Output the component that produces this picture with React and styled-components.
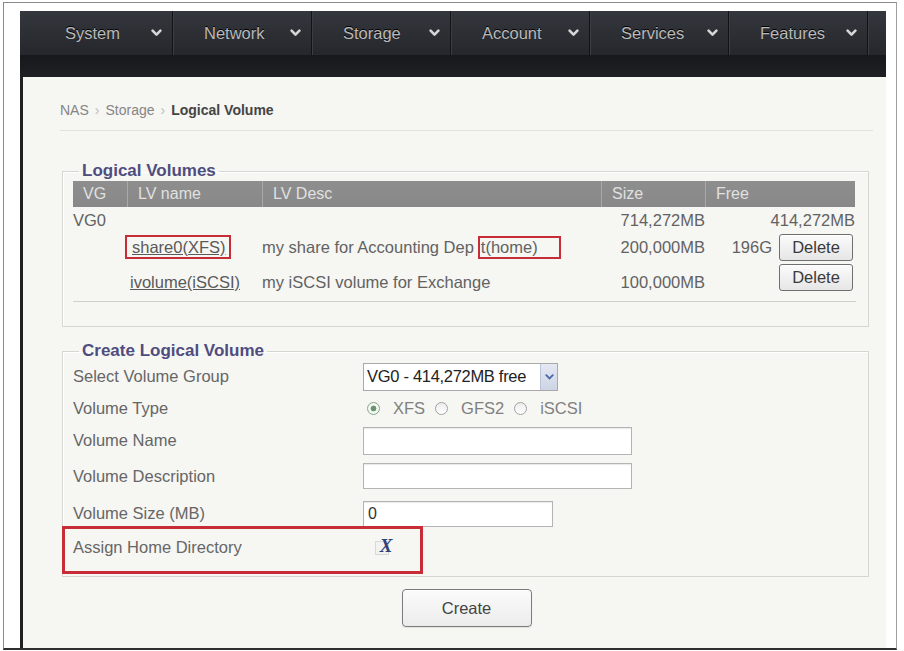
import React from 'react';
import styled, { createGlobalStyle, css } from 'styled-components';

const GlobalStyle = createGlobalStyle`
  html, body { margin: 0; padding: 0; background: #ffffff; }
  body { font-family: "Liberation Sans", Arial, sans-serif; }
  * { box-sizing: border-box; }
`;

const RED = '#c62d36';

const Frame = styled.div`
  width: 894px;
  height: 648px;
  margin: 2px 0 0 3px;
  border: 1px solid #8a8a8a;
  border-right-color: #a0a0a0;
  border-bottom: 2px solid #2e2e2e;
  padding: 8px 10px 0 16px;
  display: flex;
  flex-direction: column;
  background: #ffffff;
`;

/* ---------- top menu ---------- */

const Nav = styled.nav`
  display: flex;
  flex-direction: column;
  background: #1b1d21;
`;

const MenuRow = styled.div`
  display: flex;
  height: 44px;
  padding-left: 14px;
  background: linear-gradient(#34373d, #25272c);
`;

const MenuItem = styled.div`
  width: 139px;
  display: flex;
  align-items: center;
  padding: 0 10px 0 31px;
  border-right: 1px solid #121315;
  box-shadow: 1px 0 0 #3a3d43;
  color: #b9b9b9;
  font-size: 16.5px;
  text-shadow: 0 -1px 0 #000;
`;

const Chevron = styled.svg`
  margin-left: auto;
  flex: none;
`;

const SubBar = styled.div`
  height: 22px;
  background: linear-gradient(#16181b, #1e2024);
`;

/* ---------- page body ---------- */

const Panel = styled.main`
  flex: 1;
  background: #f6f6f3;
  border-left: 3px solid #1f2125;
  padding: 24px 13px 0 37px;
`;

const Crumbs = styled.div`
  font-size: 14px;
  line-height: 18px;
  color: #858585;
  padding-bottom: 11px;
  border-bottom: 1px solid #e1e1de;
`;

const CrumbSep = styled.span`
  color: #bcbcbc;
  margin: 0 6px;
`;

const CrumbCurrent = styled.span`
  color: #444;
  font-weight: bold;
`;

const Group = styled.fieldset`
  margin: ${p => p.$top}px 4px 0 2px;
  padding: 0 12px ${p => p.$bottom}px 10px;
  border: 1px solid #d6d6d3;
  box-shadow: inset 1px 1px 0 #ffffff;
  min-width: 0;
`;

const GroupTitle = styled.legend`
  margin-left: 6px;
  padding: 0 3px;
  font-size: 17px;
  line-height: 20px;
  font-weight: bold;
  color: #4f4d7e;
`;

/* ---------- volume table ---------- */

const VolumeTable = styled.div`
  display: grid;
  grid-template-columns: 54px 135px 339px 104px 150px;
  grid-template-rows: 26px 25px 30px 30px;
  padding-bottom: 9px;
  border-bottom: 1px solid #cfcfcc;
  font-size: 16.5px;
  color: #626262;
`;

const HeadCell = styled.div`
  background: linear-gradient(#8e8e8e, #888888);
  color: #e0e0e0;
  display: flex;
  align-items: center;
  padding-left: 10px;
  font-size: 16px;
  border-left: ${p => (p.$first ? 'none' : '1px solid #a9a9a9')};
`;

const Cell = styled.div`
  display: flex;
  align-items: ${p => (p.$low ? 'flex-end' : 'center')};
  justify-content: ${p => (p.$right ? 'flex-end' : 'flex-start')};
  gap: 7px;
  padding-left: ${p => p.$indent || 0}px;
  padding-right: ${p => p.$trail || 0}px;
  line-height: 20px;
  white-space: nowrap;
`;

const VolumeLink = styled.a`
  color: #5a5a5a;
  text-decoration: underline;
  cursor: pointer;
`;

const BoxedLink = styled(VolumeLink)`
  margin-left: -2px;
  padding: 0 3px 0 5px;
  border: 2px solid ${RED};
`;

const MarkedText = styled.span`
  position: relative;
  &::after {
    content: '';
    position: absolute;
    left: -3px;
    right: -23px;
    top: -1px;
    bottom: -2px;
    border: 2px solid ${RED};
    pointer-events: none;
  }
`;

const SmallButton = styled.button`
  width: 74px;
  height: 27px;
  padding: 0;
  border: 1px solid #6f6f6f;
  border-radius: 3px;
  background: linear-gradient(#fbfbfb, #e6e6e6);
  font-family: inherit;
  font-size: 16.5px;
  color: #3a3a3a;
  box-shadow: inset 0 1px 0 #fff;
`;

/* ---------- create form ---------- */

const FormRow = styled.div`
  position: relative;
  display: grid;
  grid-template-columns: 290px 1fr;
  align-items: center;
  height: ${p => p.$h}px;
  ${p =>
    p.$marked &&
    css`
      &::after {
        content: '';
        position: absolute;
        left: -11px;
        top: -6px;
        width: 355px;
        height: 42px;
        border: 3px solid ${RED};
        pointer-events: none;
      }
    `}
`;

const Label = styled.span`
  font-size: 16.5px;
  color: #666;
`;

const Select = styled.div`
  display: flex;
  width: 195px;
  height: 28px;
  border: 1px solid #a9a9a9;
  background: #fff;
  font-size: 16.5px;
  color: #222;
`;

const SelectText = styled.span`
  flex: 1;
  display: flex;
  align-items: center;
  padding-left: 3px;
  letter-spacing: -0.3px;
  white-space: nowrap;
`;

const SelectArrow = styled.span`
  width: 17px;
  display: flex;
  align-items: center;
  justify-content: center;
  background: linear-gradient(#e4e8f2, #cdd4e5);
  border-left: 1px solid #bcc4d8;
`;

const RadioGroup = styled.div`
  display: flex;
  align-items: center;
  padding-left: 4px;
  font-size: 16.5px;
  color: #808080;
`;

const Radio = styled.span`
  width: 13px;
  height: 13px;
  border-radius: 50%;
  border: 1px solid ${p => (p.$on ? '#86a886' : '#a2a2a2')};
  background: ${p =>
    p.$on
      ? 'radial-gradient(circle, #6a956a 0 2.6px, #f4f8f4 3.2px)'
      : 'linear-gradient(#ececec, #ffffff)'};
  margin-left: ${p => (p.$first ? 0 : 10)}px;
  margin-right: 13px;
  flex: none;
`;

const TextInput = styled.input`
  width: ${p => p.$w}px;
  height: ${p => p.$h}px;
  border: 1px solid #b4b4b4;
  box-shadow: inset 0 1px 1px #e8e8e8;
  background: #fff;
  padding: 0 4px;
  font-family: inherit;
  font-size: 16px;
  color: #333;
  outline: none;
`;

const HomeMark = styled.span`
  position: relative;
  margin-left: 12px;
  width: 16px;
  height: 16px;
  display: inline-flex;
  align-items: center;
  justify-content: center;
  &::before {
    content: '';
    position: absolute;
    left: 0;
    bottom: 0;
    width: 12px;
    height: 12px;
    border: 1px solid #d8d8d8;
    background: #f2f2f2;
  }
`;

const HomeGlyph = styled.span`
  position: relative;
  top: -2px;
  left: 3px;
  font-family: "Liberation Serif", "Times New Roman", serif;
  font-weight: bold;
  font-style: italic;
  font-size: 19px;
  line-height: 1;
  color: #30407a;
`;

const Actions = styled.div`
  display: flex;
  justify-content: center;
  padding-top: 12px;
`;

const CreateButton = styled.button`
  width: 130px;
  height: 38px;
  border: 1px solid #7b7b7b;
  border-radius: 4px;
  background: linear-gradient(#fbfbfb, #ececec);
  box-shadow: inset 0 1px 0 #fff, 0 1px 1px rgba(0, 0, 0, 0.08);
  font-family: inherit;
  font-size: 16.5px;
  color: #444;
`;

const menu = ['System', 'Network', 'Storage', 'Account', 'Services', 'Features'];

function MenuChevron() {
  return (
    <Chevron width="11" height="8" viewBox="0 0 11 8">
      <path
        d="M1.6 1.6 L5.5 5.6 L9.4 1.6"
        stroke="#d6d6d6"
        strokeWidth="2.6"
        fill="none"
        strokeLinecap="round"
        strokeLinejoin="round"
      />
    </Chevron>
  );
}

export default function App() {
  return (
    <>
      <GlobalStyle />
      <Frame>
        <Nav>
          <MenuRow>
            {menu.map(name => (
              <MenuItem key={name}>
                {name}
                <MenuChevron />
              </MenuItem>
            ))}
          </MenuRow>
          <SubBar />
        </Nav>

        <Panel>
          <Crumbs>
            NAS<CrumbSep>›</CrumbSep>Storage<CrumbSep>›</CrumbSep>
            <CrumbCurrent>Logical Volume</CrumbCurrent>
          </Crumbs>

          <Group $top={30} $bottom={24}>
            <GroupTitle>Logical Volumes</GroupTitle>
            <VolumeTable>
              <HeadCell $first>VG</HeadCell>
              <HeadCell>LV name</HeadCell>
              <HeadCell>LV Desc</HeadCell>
              <HeadCell>Size</HeadCell>
              <HeadCell>Free</HeadCell>

              <Cell>VG0</Cell>
              <Cell />
              <Cell />
              <Cell $right>714,272MB</Cell>
              <Cell $right>414,272MB</Cell>

              <Cell />
              <Cell>
                <BoxedLink>share0(XFS)</BoxedLink>
              </Cell>
              <Cell>
                my share for Accounting Dep<MarkedText>t(home)</MarkedText>
              </Cell>
              <Cell $right>200,000MB</Cell>
              <Cell $right $trail={2}>
                196G
                <SmallButton>Delete</SmallButton>
              </Cell>

              <Cell />
              <Cell $low $indent={3}>
                <VolumeLink>ivolume(iSCSI)</VolumeLink>
              </Cell>
              <Cell $low>my iSCSI volume for Exchange</Cell>
              <Cell $low $right>100,000MB</Cell>
              <Cell $right $trail={2}>
                <SmallButton>Delete</SmallButton>
              </Cell>
            </VolumeTable>
          </Group>

          <Group $top={14} $bottom={14}>
            <GroupTitle>Create Logical Volume</GroupTitle>

            <FormRow $h={31}>
              <Label>Select Volume Group</Label>
              <Select>
                <SelectText>VG0 - 414,272MB free</SelectText>
                <SelectArrow>
                  <svg width="9" height="6" viewBox="0 0 9 6">
                    <path
                      d="M1.2 1.2 L4.5 4.5 L7.8 1.2"
                      stroke="#4a68ad"
                      strokeWidth="1.8"
                      fill="none"
                      strokeLinecap="round"
                    />
                  </svg>
                </SelectArrow>
              </Select>
            </FormRow>

            <FormRow $h={32}>
              <Label>Volume Type</Label>
              <RadioGroup>
                <Radio $on $first />
                XFS
                <Radio />
                GFS2
                <Radio />
                iSCSI
              </RadioGroup>
            </FormRow>

            <FormRow $h={33}>
              <Label>Volume Name</Label>
              <TextInput $w={269} $h={28} defaultValue="" />
            </FormRow>

            <FormRow $h={38}>
              <Label>Volume Description</Label>
              <TextInput $w={269} $h={26} defaultValue="" />
            </FormRow>

            <FormRow $h={37}>
              <Label>Volume Size (MB)</Label>
              <TextInput $w={190} $h={26} defaultValue="0" />
            </FormRow>

            <FormRow $h={30} $marked>
              <Label>Assign Home Directory</Label>
              <HomeMark>
                <HomeGlyph>X</HomeGlyph>
              </HomeMark>
            </FormRow>
          </Group>

          <Actions>
            <CreateButton>Create</CreateButton>
          </Actions>
        </Panel>
      </Frame>
    </>
  );
}
